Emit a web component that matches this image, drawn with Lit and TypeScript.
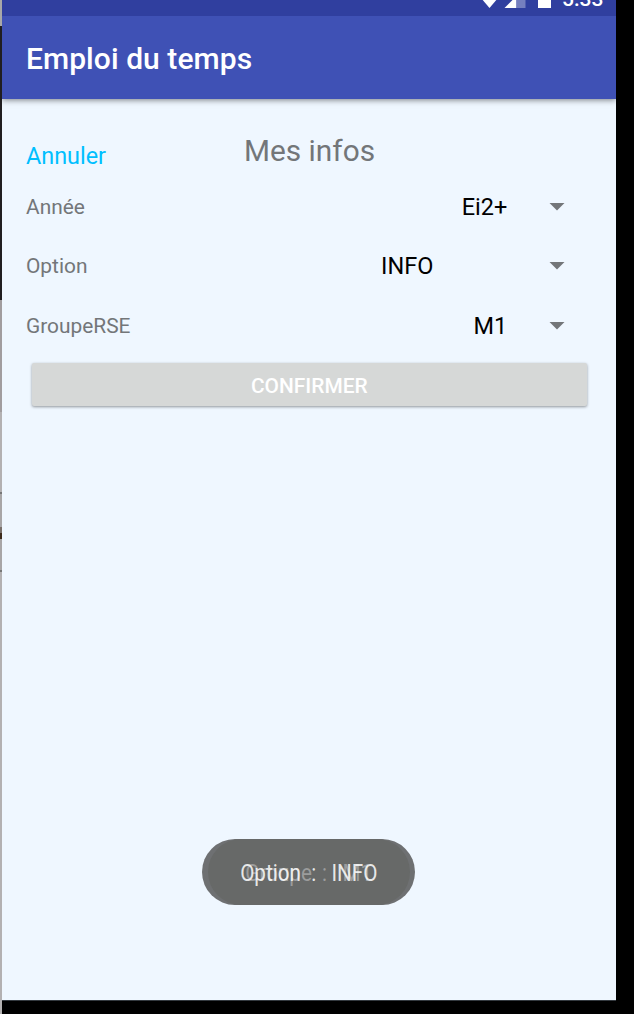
import { LitElement, html, css } from "lit";
import { customElement } from "lit/decorators.js";

const FIELDS = [
  { label: "Année", value: "Ei2+", cls: "near" },
  { label: "Option", value: "INFO", cls: "far" },
  { label: "GroupeRSE", value: "M1", cls: "near" },
];

@customElement("app-root")
export class AppRoot extends LitElement {
  static styles = css`
    :host {
      display: flex;
      width: 634px;
      height: 1014px;
      overflow: hidden;
      background: #000;
      font-family: Roboto, "Liberation Sans", sans-serif;
      white-space: nowrap;
    }
    .edge {
      flex: none;
      width: 2px;
      background: linear-gradient(
        #a8a8a8 0 26px, #201e20 26px 300px, #a19d9f 300px 412px,
        #b3b1b2 412px 492px, #777 492px 494px, #a8a6a7 494px 527px,
        #79706a 527px 533px, #3d2b1b 533px 539px, #a8a6a7 539px 570px,
        #777 570px 572px, #b3b1b2 572px
      );
    }
    .screen {
      position: relative;
      flex: none;
      box-sizing: border-box;
      width: 614px;
      height: 1001px;
      background: #eff7ff;
      border-bottom: 1px solid #343a40;
      display: flex;
      flex-direction: column;
    }
    .status {
      height: 16px;
      flex: none;
      overflow: hidden;
      background: #303f9f;
      display: flex;
      justify-content: flex-end;
      align-items: flex-end;
    }
    .icons { display: block; flex: none; width: 72px; height: 16px; margin-right: 11px; }
    .clock {
      flex: none;
      width: 42px;
      margin-right: 12px;
      height: 16px;
      line-height: 24px;
      color: #fff;
      font-size: 21px;
      font-weight: 500;
      display: flex;
      align-items: flex-end;
    }
    .clock span { margin-bottom: 5px; }
    .bar {
      height: 83px;
      flex: none;
      background: #3f51b5;
      box-shadow: 0 1px 6px rgba(0, 0, 0, 0.5);
      clip-path: inset(0 0 -12px 0);
      padding-left: 24px;
      color: #fff;
      font-size: 30px;
      font-weight: 500;
      letter-spacing: 0.06px;
      line-height: 86px;
    }
    .head {
      display: grid;
      grid-template-columns: 218px 1fr;
      height: 78px;
      flex: none;
      padding-left: 24px;
    }
    .cancel { color: #00bfff; font-size: 23.4px; line-height: 28px; padding-top: 43px; }
    .title { color: #737679; font-size: 29.8px; line-height: 36px; padding-top: 34px; }
    .row {
      display: flex;
      align-items: center;
      justify-content: space-between;
      height: 59.6px;
      flex: none;
      padding: 0 51.3px 0 24px;
    }
    .label { color: #737679; font-size: 20.9px; }
    .pick { display: flex; align-items: center; color: #000; font-size: 23.5px; }
    .near { margin-right: 41.4px; }
    .far { margin-right: 115.4px; }
    .arrow { display: block; width: 16px; height: 8px; }
    .confirm {
      flex: none;
      height: 43px;
      margin: 7.2px 29.4px 0 30px;
      border: 0;
      padding: 0;
      border-radius: 2px;
      background: #d6d8d7;
      box-shadow: 0 1px 3px rgba(0, 0, 0, 0.4);
      color: #fff;
      font: 500 20.9px/43px Roboto, "Liberation Sans", sans-serif;
      padding-top: 2px;
    }
    .toast {
      position: absolute;
      left: 200px;
      top: 839px;
      width: 213px;
      height: 66px;
      border-radius: 33px;
      background: #6e7072;
      display: grid;
      place-items: center;
    }
    .toast .plate {
      grid-area: 1 / 1;
      width: 202px;
      height: 66px;
      border-radius: 33px;
      background: #676968;
    }
    .msg { grid-area: 1 / 1; font-size: 24px; line-height: 28px; white-space: pre; padding-top: 2px; }
    .old { color: #9b9c9c; transform: scaleX(0.86); }
    .new { color: rgba(255, 255, 255, 0.86); transform: scaleX(0.86); }
  `;

  render() {
    return html`
      <div class="edge"></div>
      <main class="screen">
        <div class="status">
          <svg class="icons" viewBox="0 0 72 16">
            <path d="M10.5 8 L2 -2 H19 Z" fill="#fff" />
            <path d="M25.5 8 L37.5 -4 V8 Z" fill="#fff" />
            <path d="M37.5 0 H46.5 V8 H37.5 Z" fill="#757fbf" />
            <path d="M59 0 H72 V8 H59 Z" fill="#fff" />
          </svg>
          <div class="clock"><span>5:33</span></div>
        </div>
        <header class="bar">Emploi du temps</header>
        <div class="head">
          <span class="cancel">Annuler</span>
          <span class="title">Mes infos</span>
        </div>
        ${FIELDS.map(
          (f) => html`<div class="row">
            <span class="label">${f.label}</span>
            <span class="pick">
              <span class=${f.cls}>${f.value}</span>
              <svg class="arrow" viewBox="0 0 16 8"><path d="M0.5 0 H15.5 L8 7.6 Z" fill="#737679" /></svg>
            </span>
          </div>`
        )}
        <button class="confirm">CONFIRMER</button>
        <div class="toast">
          <span class="plate"></span>
          <span class="msg old">Groupe  :   M1</span>
          <span class="msg new">Option  :   INFO</span>
        </div>
      </main>
    `;
  }
}
